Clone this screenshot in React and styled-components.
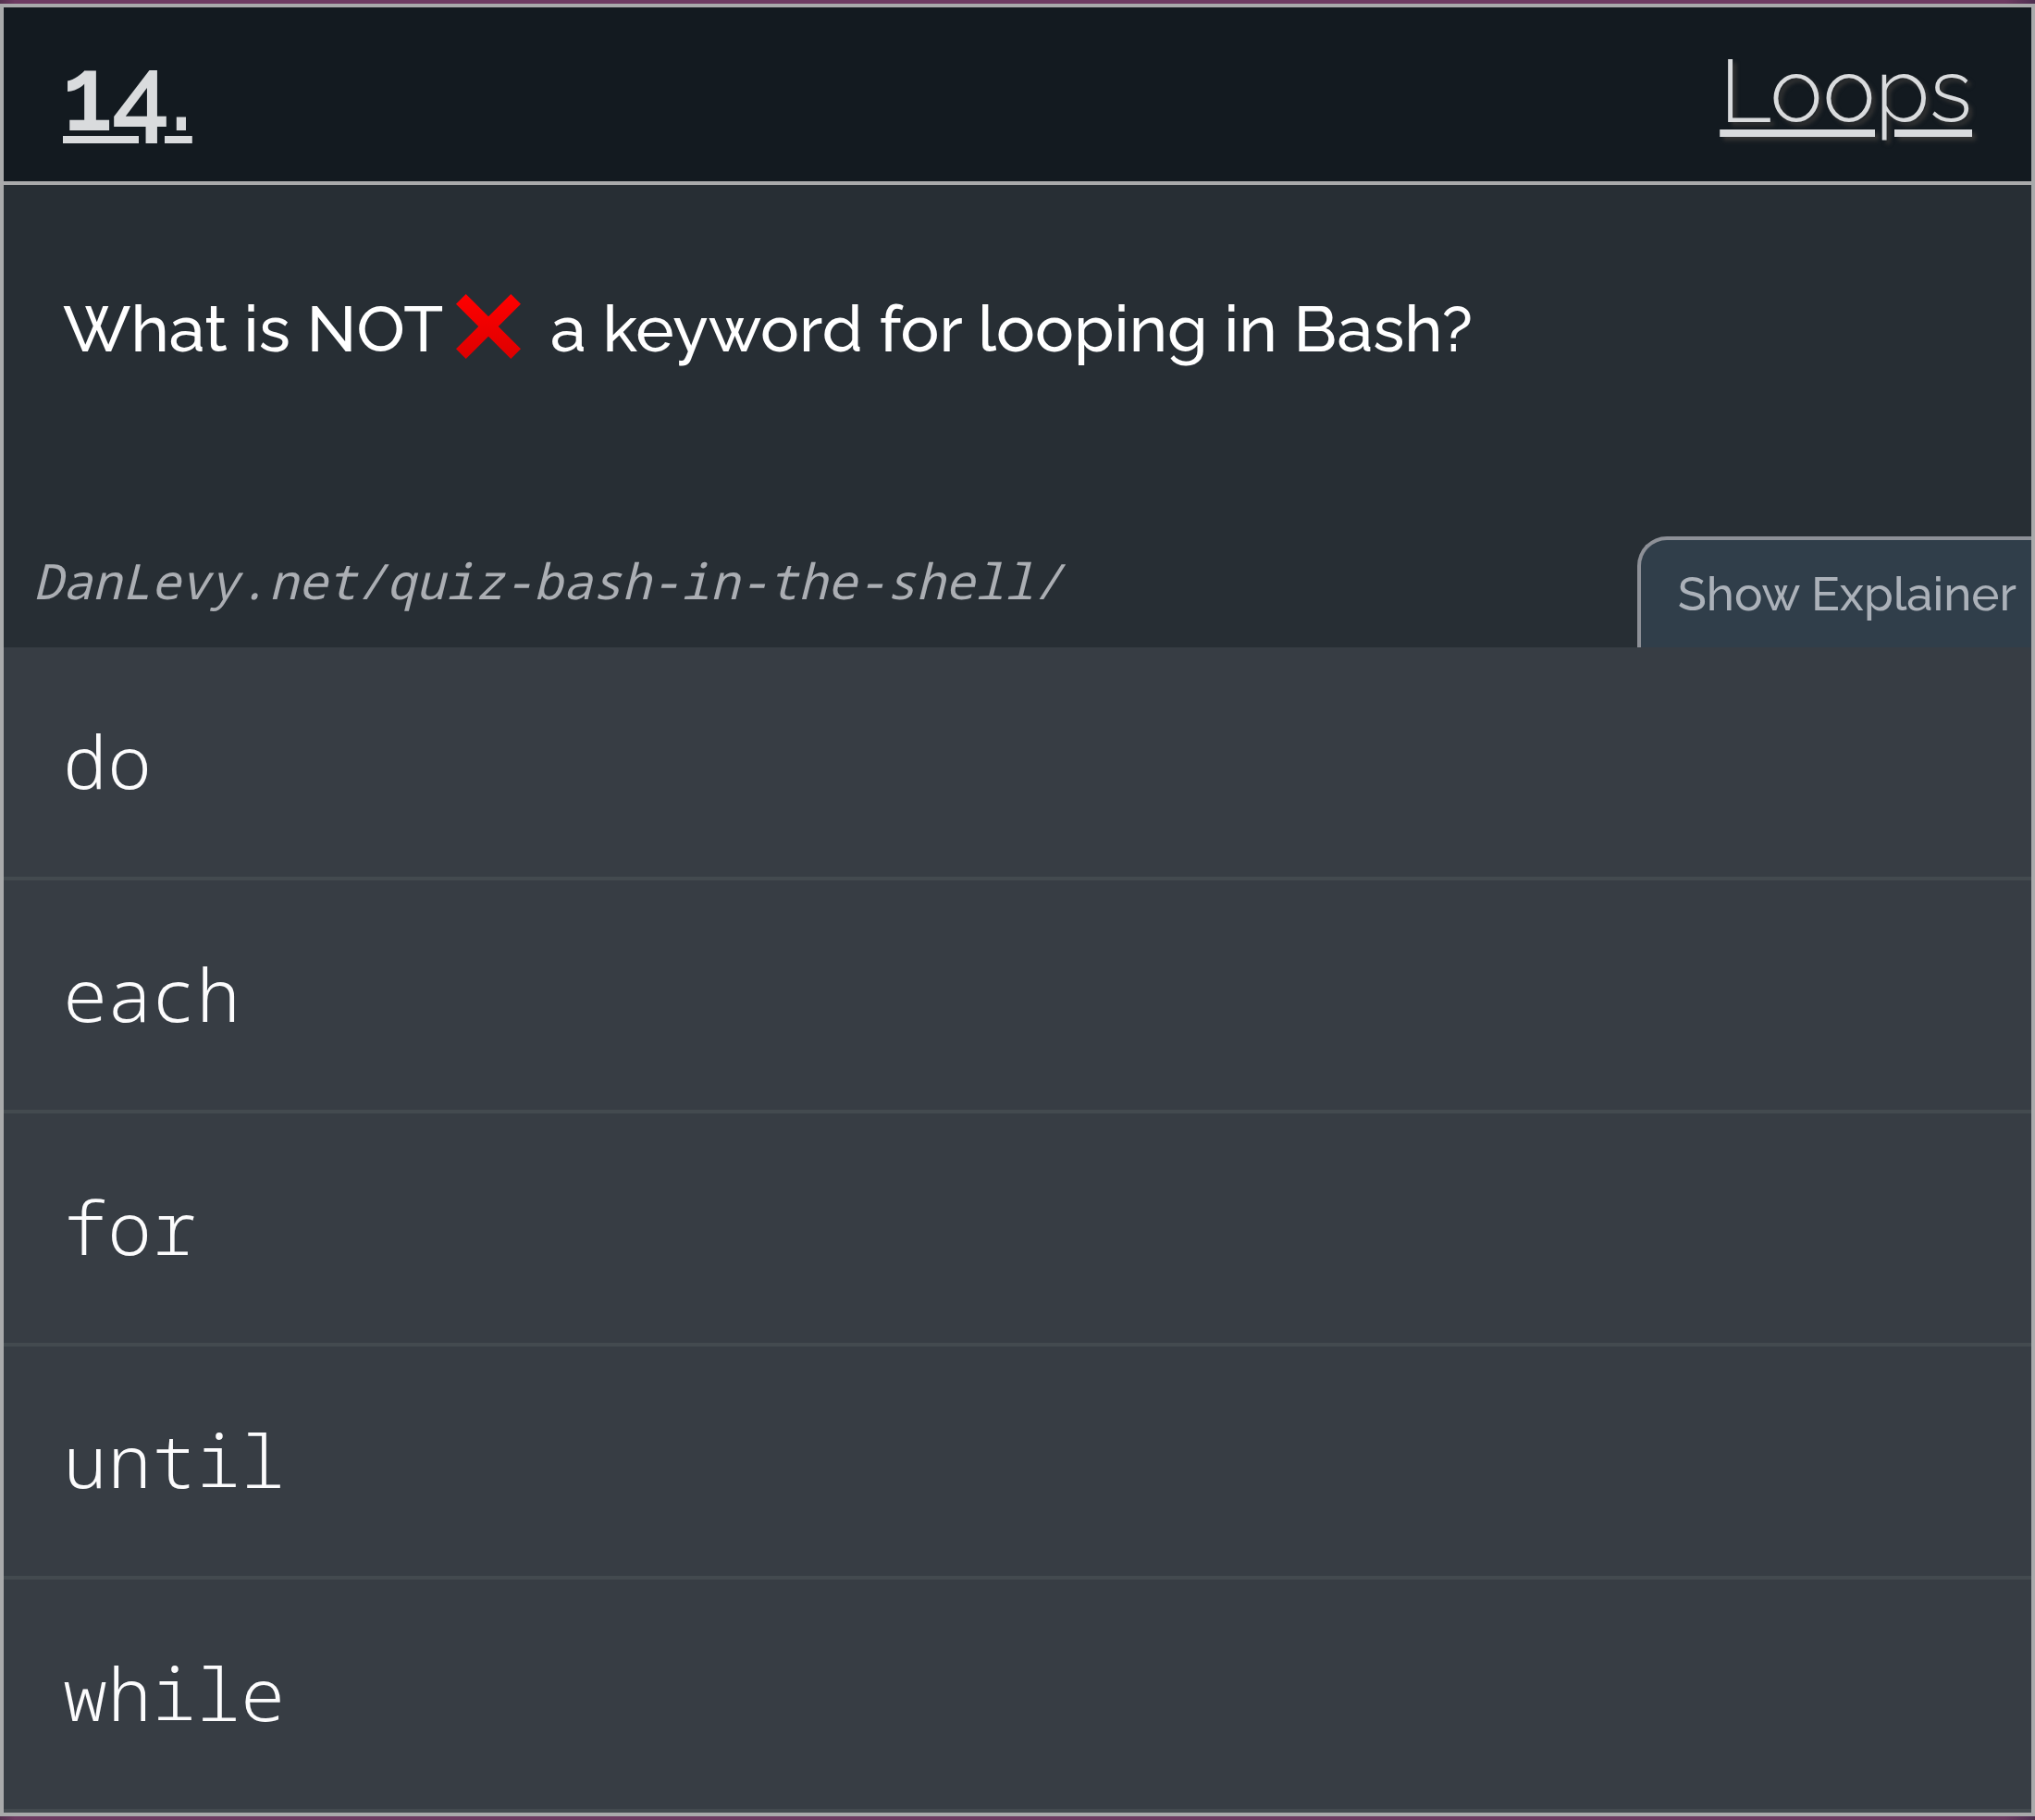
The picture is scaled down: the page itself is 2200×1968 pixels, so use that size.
import React from "react";
import styled, { createGlobalStyle } from "styled-components";

const sans = `Raleway, Lato, "Open Sans", sans-serif`;
const mono = `"Noto Sans Mono", "Liberation Mono", monospace`;
const line = "#a9aaab";

const GlobalStyle = createGlobalStyle`
  *, *::before, *::after { box-sizing: border-box; }
  body {
    margin: 0;
    background: linear-gradient(90deg, #55324f 0, #6e3b62 16px, #6e3b62 calc(100% - 32px), #4d2f50 100%);
  }
`;

const Page = styled.div`
  padding: 4px 0;
`;

const Card = styled.main`
  border: 4px solid ${line};
  background: #272e34;
  color: #fff;
  font-family: ${sans};
`;

const Header = styled.header`
  display: flex;
  justify-content: space-between;
  align-items: center;
  height: 192px;
  padding: 0 64px;
  border-bottom: 4px solid ${line};
  background: #131a20;
`;

const HeaderLink = styled.a`
  color: #d9dbdd;
  line-height: 120px;
  text-decoration: underline;
  text-decoration-thickness: 8px;
  text-underline-offset: 8px;
`;

const NumberLink = styled(HeaderLink)`
  font-size: 112px;
  font-weight: 600;
  text-underline-offset: 6px;
`;

const TopicLink = styled(HeaderLink)`
  padding-bottom: 8px;
  font-size: 96px;
  font-weight: 300;
  text-shadow: 4px 4px 4px #333;
`;

const Prompt = styled.section`
  display: flex;
  flex-direction: column;
  justify-content: space-between;
  height: 500px;
`;

const Question = styled.h1`
  margin: 0;
  padding: 107px 64px 0;
  font-size: 70px;
  font-weight: 500;
  line-height: 96px;
`;

const Cross = styled.svg`
  width: 70px;
  height: 70px;
  margin: 0 14px;
  vertical-align: -8px;
`;

const Footer = styled.div`
  display: flex;
  justify-content: space-between;
  align-items: flex-end;
`;

const Source = styled.a`
  padding: 0 32px 40px;
  color: #abaeb3;
  font-family: ${mono};
  font-size: 53px;
  font-style: italic;
  line-height: 64px;
  text-decoration: none;
`;

const Explainer = styled.button`
  height: 120px;
  padding: 0 16px 0 40px;
  border: solid #8d9097;
  border-width: 4px 0 0 4px;
  border-radius: 32px 0 0 0;
  background: #303e4a;
  color: #abb1b9;
  font-family: ${sans};
  font-size: 51px;
  font-weight: 500;
  line-height: 64px;
`;

const Options = styled.ul`
  margin: 0;
  padding: 0;
  list-style: none;
`;

const Option = styled.button`
  display: block;
  width: 100%;
  height: 252px;
  padding: 0 64px 4px;
  border: 0;
  border-bottom: 4px solid #434a4f;
  background: #373d44;
  color: #fcfcfd;
  font-family: ${mono};
  font-size: 80px;
  font-weight: 300;
  line-height: 96px;
  text-align: left;
`;

const answers = ["do", "each", "for", "until", "while"];

export default function App() {
  return (
    <>
      <GlobalStyle />
      <Page>
        <Card>
          <Header>
            <NumberLink href="#14">14.</NumberLink>
            <TopicLink href="#loops">Loops</TopicLink>
          </Header>
          <Prompt>
            <Question>
              What is NOT
              <Cross viewBox="0 0 72 72" role="img" aria-label="cross mark">
                <defs>
                  <linearGradient id="red" x1="0" y1="0" x2="0" y2="1">
                    <stop offset="0" stopColor="#ff0000" />
                    <stop offset="1" stopColor="#dd0000" />
                  </linearGradient>
                </defs>
                <path fill="url(#red)" d="M11 0 36 25 61 0 72 11 47 36 72 61 61 72 36 47 11 72 0 61 25 36 0 11Z" />
              </Cross>
              {" "}a keyword for looping in Bash?
            </Question>
            <Footer>
              <Source href="#source">DanLevy.net/quiz-bash-in-the-shell/</Source>
              <Explainer type="button">Show Explainer</Explainer>
            </Footer>
          </Prompt>
          <Options>
            {answers.map((a) => (
              <li key={a}>
                <Option type="button">{a}</Option>
              </li>
            ))}
          </Options>
        </Card>
      </Page>
    </>
  );
}
